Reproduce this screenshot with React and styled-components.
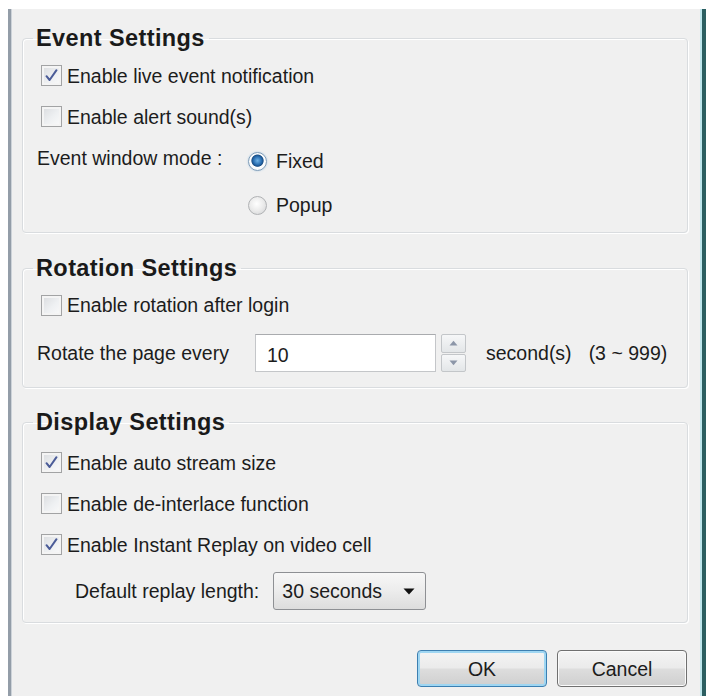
import React from "react";
import styled, { createGlobalStyle } from "styled-components";

const GlobalStyle = createGlobalStyle`
  html, body { margin: 0; padding: 0; background: #ffffff; }
  body { font-family: "Liberation Sans", Arial, sans-serif; color: #1c1c1c; }
  * { box-sizing: border-box; }
`;

const Window = styled.div`
  margin: 9px 0 0 8px;
  width: 698px;
  height: 687px;
  background: #f0f0f0;
  border-left: 3px solid #939da8;
  border-right: 4px solid #2c5f61;
  box-shadow: inset 1px 0 0 #cdd3d9, inset -2px 0 0 #bfe6ec;
  padding: 17px 14px 0 11px;
  font-size: 19.5px;
  line-height: 24px;
`;

const Group = styled.fieldset`
  margin: ${(p) => p.$mt || 0}px 0 0 0;
  padding: ${(p) => p.$pt}px 0 ${(p) => p.$pb}px 10px;
  border: 1px solid #d9dcdf;
  border-radius: 4px;
  box-shadow: inset 1px 1px 0 #ffffff, 1px 1px 0 #ffffff;
  min-width: 0;
`;

const Legend = styled.legend`
  padding: 0 4px 0 3px;
  font-size: 23.5px;
  font-weight: bold;
  letter-spacing: 0.4px;
  line-height: 24px;
  color: #1a1a1a;
`;

const Body = styled.div`
  padding-left: 4px;
  display: flex;
  flex-direction: column;
`;

const Row = styled.div`
  display: flex;
  align-items: center;
  height: ${(p) => p.$h || 41}px;
  margin-top: ${(p) => p.$mt || 0}px;
  padding-left: ${(p) => p.$indent || 0}px;
  white-space: nowrap;
`;

const CheckBox = styled.span`
  flex: none;
  width: 21px;
  height: 21px;
  margin: 0 5px 0 4px;
  border: 1px solid #a2a3a4;
  background: linear-gradient(135deg, #d9dbde 0%, #eef0f2 55%, #fafafa 100%);
  box-shadow: inset 0 0 0 2px #f4f4f4;
  display: flex;
  align-items: center;
  justify-content: center;
`;

const Check = () => (
  <svg width="15" height="15" viewBox="0 0 15 15">
    <path d="M2.5 8.2 L5.6 12 L12.5 2.2" fill="none" stroke="#4b5c98" strokeWidth="2" strokeLinecap="round" strokeLinejoin="round" />
  </svg>
);

const Text = styled.span`
  display: inline-block;
  width: ${(p) => (p.$w ? `${p.$w}px` : "auto")};
  margin-left: ${(p) => p.$ml || 0}px;
  flex: none;
`;

const ModeGrid = styled.div`
  display: grid;
  grid-template-columns: 211px auto;
  margin-top: 2px;
`;

const ModeLabel = styled.div`
  height: 38px;
  display: flex;
  align-items: center;
`;

const RadioList = styled.div`
  display: flex;
  flex-direction: column;
`;

const RadioItem = styled.div`
  display: flex;
  align-items: center;
  height: 44px;
`;

const RadioCircle = styled.span`
  flex: none;
  width: 19px;
  height: 19px;
  border-radius: 50%;
  margin-right: 9px;
  border: 1px solid ${(p) => (p.$on ? "#7f9db9" : "#b0b2b4")};
  background: ${(p) =>
    p.$on
      ? "radial-gradient(circle at 50% 45%, #6fb2e6 0%, #2a6fb2 32%, #1b4f86 45%, #ffffff 52%, #e9eef3 100%)"
      : "radial-gradient(circle at 45% 40%, #ffffff 0%, #ebebeb 50%, #cfd1d3 100%)"};
  box-shadow: ${(p) => (p.$on ? "0 0 2px #a9c8e2" : "none")};
`;

const NumberField = styled.div`
  display: flex;
  align-items: stretch;
  height: 38px;
`;

const TextInput = styled.div`
  width: 181px;
  border: 1px solid #c4c6c9;
  border-top-color: #a9abae;
  background: #ffffff;
  display: flex;
  align-items: center;
  padding-left: 11px;
  padding-top: 3px;
`;

const Spinner = styled.div`
  width: 25px;
  margin-left: 5px;
  display: flex;
  flex-direction: column;
  gap: 1px;
`;

const SpinButton = styled.div`
  flex: 1;
  border: 1px solid #c3c6c9;
  border-radius: 2px;
  background: linear-gradient(#f6f7f8, #e3e6e8);
  display: flex;
  align-items: center;
  justify-content: center;
`;

const Arrow = ({ up }) => (
  <svg width="9" height="6" viewBox="0 0 9 6">
    <path d={up ? "M0.5 5.5 L4.5 0.8 L8.5 5.5 Z" : "M0.5 0.5 L4.5 5.2 L8.5 0.5 Z"} fill="#8c96a8" />
  </svg>
);

const Select = styled.div`
  width: 153px;
  height: 38px;
  margin-left: 14px;
  border: 1px solid #8e9094;
  border-radius: 3px;
  background: linear-gradient(#f7f7f7 0%, #ececec 50%, #dddddd 100%);
  display: flex;
  align-items: center;
  justify-content: space-between;
  padding: 0 10px 0 8px;
`;

const Caret = () => (
  <svg width="12" height="7" viewBox="0 0 12 7">
    <path d="M0.5 0.5 L11.5 0.5 L6 6.5 Z" fill="#111" />
  </svg>
);

const ButtonBar = styled.div`
  display: flex;
  justify-content: flex-end;
  gap: 10px;
  margin-top: 27px;
  padding-right: 1px;
`;

const Button = styled.div`
  width: 130px;
  height: 37px;
  border: 1px solid ${(p) => (p.$default ? "#3c7fb1" : "#707070")};
  border-radius: 4px;
  background: linear-gradient(#f4f4f4 0%, #ebebeb 48%, #dddddd 52%, #cfcfcf 100%);
  box-shadow: ${(p) => (p.$default ? "inset 0 0 0 2px #9fd6f2" : "inset 0 0 0 1px #fbfbfb")};
  display: flex;
  align-items: center;
  justify-content: center;
  font-size: 19.5px;
  color: #1c1c1c;
`;

const CheckRow = ({ checked, children, h, mt }) => (
  <Row $h={h} $mt={mt}>
    <CheckBox>{checked && <Check />}</CheckBox>
    <Text>{children}</Text>
  </Row>
);

export default function App() {
  return (
    <>
      <GlobalStyle />
      <Window>
        <Group $pt={5} $pb={5}>
          <Legend>Event Settings</Legend>
          <Body>
            <CheckRow checked>Enable live event notification</CheckRow>
            <CheckRow>Enable alert sound(s)</CheckRow>
            <ModeGrid>
              <ModeLabel>Event window mode :</ModeLabel>
              <RadioList>
                <RadioItem>
                  <RadioCircle $on />
                  <Text>Fixed</Text>
                </RadioItem>
                <RadioItem>
                  <RadioCircle />
                  <Text>Popup</Text>
                </RadioItem>
              </RadioList>
            </ModeGrid>
          </Body>
        </Group>

        <Group $mt={23} $pt={5} $pb={14}>
          <Legend>Rotation Settings</Legend>
          <Body>
            <CheckRow h={40}>Enable rotation after login</CheckRow>
            <Row $h={40} $mt={8}>
              <Text $w={218}>Rotate the page every</Text>
              <NumberField>
                <TextInput>10</TextInput>
                <Spinner>
                  <SpinButton>
                    <Arrow up />
                  </SpinButton>
                  <SpinButton>
                    <Arrow />
                  </SpinButton>
                </Spinner>
              </NumberField>
              <Text $ml={20}>second(s)</Text>
              <Text $ml={17}>(3 ~ 999)</Text>
            </Row>
          </Body>
        </Group>

        <Group $mt={22} $pt={8} $pb={11}>
          <Legend>Display Settings</Legend>
          <Body>
            <CheckRow checked>Enable auto stream size</CheckRow>
            <CheckRow>Enable de-interlace function</CheckRow>
            <CheckRow checked>Enable Instant Replay on video cell</CheckRow>
            <Row $h={40} $mt={6} $indent={38}>
              <Text>Default replay length:</Text>
              <Select>
                <span>30 seconds</span>
                <Caret />
              </Select>
            </Row>
          </Body>
        </Group>

        <ButtonBar>
          <Button $default>OK</Button>
          <Button>Cancel</Button>
        </ButtonBar>
      </Window>
    </>
  );
}
